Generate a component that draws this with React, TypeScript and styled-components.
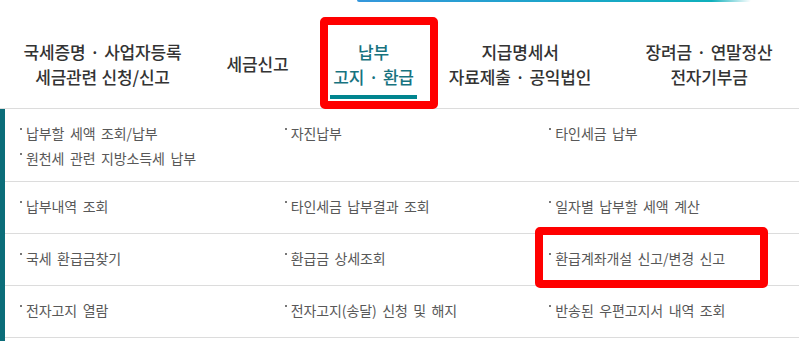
import styled, { createGlobalStyle } from "styled-components";

const GlobalStyle = createGlobalStyle`
  html, body {
    margin: 0;
    padding: 0;
    background: #fff;
  }
  body {
    font-family: "Noto Sans CJK KR", "Noto Sans", sans-serif;
    width: 799px;
    height: 341px;
    overflow: hidden;
  }
`;

const Page = styled.div`
  position: relative;
  width: 799px;
  height: 341px;
  overflow: hidden;
`;

const SearchEdge = styled.div`
  height: 2px;
  margin-left: 357px;
  width: 394px;
  border-radius: 0 0 2px 2px;
  background: linear-gradient(90deg, #3597dc 0%, #1aa6c8 55%, #0fb0bc 90%, rgba(15, 176, 188, 0) 100%);
`;

const Gnb = styled.nav`
  display: flex;
  align-items: stretch;
  height: 106px;
  border-bottom: 1px solid #dcdcdc;
`;

const Tab = styled.div<{ $w: number; $ml?: number; $active?: boolean }>`
  position: relative;
  flex: 0 0 ${(p) => p.$w}px;
  margin-left: ${(p) => p.$ml ?? 0}px;
  display: flex;
  flex-direction: column;
  align-items: center;
  justify-content: center;
  padding-top: 17px;
  box-sizing: border-box;
  font-size: 17px;
  line-height: 25px;
  font-weight: 500;
  letter-spacing: -0.2px;
  word-spacing: 1px;
  color: ${(p) => (p.$active ? "#17737f" : "#333")};
  text-align: center;
  white-space: nowrap;
`;

const ActiveBar = styled.span`
  position: absolute;
  left: 0;
  right: 0;
  bottom: 9px;
  height: 4px;
  background: #00858f;
`;

const Content = styled.div`
  display: flex;
`;

const SideBar = styled.div`
  flex: 0 0 5px;
  background: #0b6d79;
  min-height: 240px;
`;

const Rows = styled.div`
  flex: 1;
`;

const Row = styled.div`
  display: grid;
  grid-template-columns: repeat(3, 1fr);
  padding: 12px 0 10px;
  min-height: 52px;
  box-sizing: border-box;
  border-bottom: 1px solid #dcdcdc;
`;

const Cell = styled.ul`
  list-style: none;
  margin: 0;
  padding: 0 0 0 15px;
`;

const Item = styled.li`
  font-size: 14px;
  line-height: 25px;
  color: #585858;
  word-spacing: 2.5px;
  letter-spacing: -0.1px;
  white-space: nowrap;
  &::before {
    content: "";
    display: inline-block;
    width: 2px;
    height: 2px;
    background: #777;
    margin-right: 4px;
    vertical-align: 9px;
  }
`;

const Highlight = styled.div<{ $x: number; $y: number; $w: number; $h: number }>`
  position: absolute;
  left: ${(p) => p.$x}px;
  top: ${(p) => p.$y}px;
  width: ${(p) => p.$w}px;
  height: ${(p) => p.$h}px;
  box-sizing: border-box;
  border: 8px solid #ff0000;
  border-radius: 5px;
  pointer-events: none;
`;

const tabs = [
  { w: 205, lines: ["국세증명 · 사업자등록", "세금관련 신청/신고"] },
  { w: 105, lines: ["세금신고"] },
  { w: 87, ml: 20, lines: ["납부", "고지 · 환급"], active: true },
  { w: 202, ml: 2, lines: ["지급명세서", "자료제출 · 공익법인"] },
  { w: 176, lines: ["장려금 · 연말정산", "전자기부금"] },
];

const rows: string[][][] = [
  [["납부할 세액 조회/납부", "원천세 관련 지방소득세 납부"], ["자진납부"], ["타인세금 납부"]],
  [["납부내역 조회"], ["타인세금 납부결과 조회"], ["일자별 납부할 세액 계산"]],
  [["국세 환급금찾기"], ["환급금 상세조회"], ["환급계좌개설 신고/변경 신고"]],
  [["전자고지 열람"], ["전자고지(송달) 신청 및 해지"], ["반송된 우편고지서 내역 조회"]],
];

export default function App() {
  return (
    <Page>
      <GlobalStyle />
      <SearchEdge />
      <Gnb>
        {tabs.map((t, i) => (
          <Tab key={i} $w={t.w} $ml={t.ml} $active={t.active}>
            {t.lines.map((l) => (
              <span key={l}>{l}</span>
            ))}
            {t.active && <ActiveBar />}
          </Tab>
        ))}
      </Gnb>
      <Content>
        <SideBar />
        <Rows>
          {rows.map((r, i) => (
            <Row key={i}>
              {r.map((c, j) => (
                <Cell key={j}>
                  {c.map((txt) => (
                    <Item key={txt}>{txt}</Item>
                  ))}
                </Cell>
              ))}
            </Row>
          ))}
        </Rows>
      </Content>
      <Highlight $x={320} $y={17} $w={118} $h={92} />
      <Highlight $x={535} $y={227} $w={233} $h={61} />
    </Page>
  );
}
